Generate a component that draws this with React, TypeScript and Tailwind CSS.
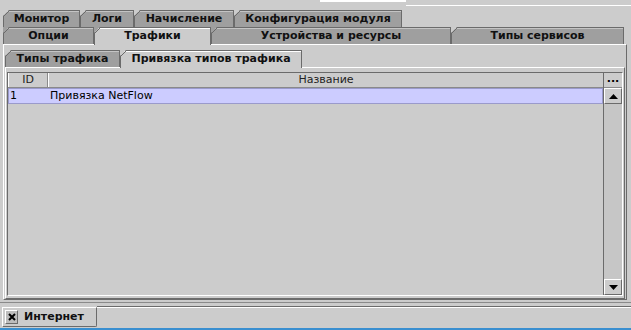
import React from "react";

const font = { fontFamily: '"DejaVu Sans", Verdana, sans-serif' };

function Corner({ bg }: { bg: string }) {
  return (
    <svg className="absolute left-[-1px] top-[-1px]" width="7" height="7" viewBox="0 0 7 7">
      <polygon points="0,0 6,0 0,6" fill={bg} />
      <line x1="0.5" y1="6.5" x2="6.5" y2="0.5" stroke="#6b6b6b" strokeWidth="1" />
    </svg>
  );
}

function Tab({
  label,
  width,
  active,
  cornerBg = "#cccccc",
}: {
  label: string;
  width: number;
  active?: boolean;
  cornerBg?: string;
}) {
  return (
    <div
      className={
        "relative flex items-center justify-center border-t border-l border-r border-[#6b6b6b] text-[11px] font-bold text-[#111] shrink-0 " +
        (active ? "bg-[#cccccc] h-[18px] z-10 -mb-[1px]" : "bg-[#9f9f9f] h-[17px]")
      }
      style={{ width }}
    >
      <div className={"absolute inset-x-0 top-0 h-px " + (active ? "bg-white" : "bg-[#c4c4c4]")} />
      <Corner bg={cornerBg} />
      <span className="relative">{label}</span>
    </div>
  );
}

export default function App() {
  return (
    <div className="relative w-[631px] h-[330px] bg-[#cccccc] overflow-hidden flex flex-col" style={font}>
      {/* remains of window above */}
      <div className="relative h-[10px] shrink-0">
        <div className="absolute left-[320px] top-0 w-[86px] h-[2px] bg-white" />
        <div className="absolute left-[406px] top-[5px] right-0 h-px bg-white" />
      </div>

      {/* module tabs, two rows */}
      <div className="flex pl-[3px] h-[17px] shrink-0">
        <Tab label="Монитор" width={77} />
        <Tab label="Логи" width={54} />
        <Tab label="Начисление" width={100} />
        <Tab label="Конфигурация модуля" width={168} />
      </div>
      <div className="flex pl-[3px] h-[17px] shrink-0 items-start">
        <Tab label="Опции" width={91} cornerBg="#9f9f9f" />
        <Tab label="Трафики" width={117} active cornerBg="#9f9f9f" />
        <Tab label="Устройства и ресурсы" width={240} cornerBg="#9f9f9f" />
        <Tab label="Типы сервисов" width={173} />
      </div>

      {/* main panel */}
      <div className="mx-[3px] mr-[4px] h-[256px] shrink-0 border-t border-l border-white border-r border-b border-r-[#6b6b6b] border-b-[#6b6b6b] flex flex-col px-[1px] pt-[5px]">
        <div className="flex h-[17px] shrink-0 items-start">
          <Tab label="Типы трафика" width={115} />
          <Tab label="Привязка типов трафика" width={182} active />
        </div>
        <div className="flex-1 border-t border-l border-white border-r border-b border-r-[#6b6b6b] border-b-[#6b6b6b] px-[1px] pt-[4px] pb-[2px]">
          {/* scroll pane */}
          <div className="h-full border-t border-l border-[#6b6b6b] border-r border-b border-r-white border-b-white flex">
            <div className="flex-1 flex flex-col">
              <div className="flex h-[15px] text-[11px] text-[#222] border-b border-[#8a8a8a]">
                <div className="w-[40px] flex items-center justify-center border-r border-[#8a8a8a] border-l border-l-white">ID</div>
                <div className="flex-1 flex items-center justify-center border-l border-l-white">Название</div>
              </div>
              <div className="flex h-[16px] text-[11px] text-black bg-[#ccccff] border border-[#9a9acb]">
                <div className="w-[39px] flex items-center pl-[1px]">1</div>
                <div className="flex-1 flex items-center pl-[2px]">Привязка NetFlow</div>
              </div>
            </div>
            {/* vertical scrollbar */}
            <div className="w-[19px] flex flex-col border-l border-[#6b6b6b]">
              <div className="h-[15px] flex items-center justify-center border-b border-[#8a8a8a] text-[11px] font-bold leading-none pb-[4px]">...</div>
              <div className="h-[16px] flex items-center justify-center border border-white border-r-[#6b6b6b] border-b-[#6b6b6b]">
                <svg width="9" height="5" viewBox="0 0 9 5"><polygon points="4.5,0 9,5 0,5" fill="#000" /></svg>
              </div>
              <div className="flex-1 bg-[#c6c6c6]" />
              <div className="h-[16px] flex items-center justify-center border border-white border-r-[#6b6b6b] border-b-[#6b6b6b]">
                <svg width="9" height="5" viewBox="0 0 9 5"><polygon points="0,0 9,0 4.5,5" fill="#000" /></svg>
              </div>
            </div>
          </div>
        </div>
      </div>

      {/* bottom document tabs */}
      <div className="relative flex-1 flex items-end pl-[2px]">
        <div className="absolute left-0 right-0 top-[2px] h-px bg-[#8a8a8a]" />
        <div className="absolute left-[97px] right-0 top-[6px] h-px bg-[#6b6b6b]" />
        <div className="absolute left-[97px] right-0 top-[7px] h-px bg-white" />
        <div className="relative flex items-center gap-[6px] w-[95px] h-[20px] mb-[3px] border-t border-l border-white border-r border-b border-r-[#6b6b6b] border-b-[#6b6b6b] rounded-br-[2px] pl-[2px] text-[11px] font-bold text-[#111]">
          <div className="w-[13px] h-[14px] bg-[#bdbdbd] border border-white border-r-[#6b6b6b] border-b-[#6b6b6b] flex items-center justify-center">
            <svg width="8" height="8" viewBox="0 0 8 8">
              <path d="M1 1 L7 7 M7 1 L1 7" stroke="#000" strokeWidth="2" />
            </svg>
          </div>
          <span>Интернет</span>
        </div>
        <div className="absolute left-0 right-0 bottom-0 h-[2px] bg-[#3a8fd0]" />
      </div>
    </div>
  );
}
